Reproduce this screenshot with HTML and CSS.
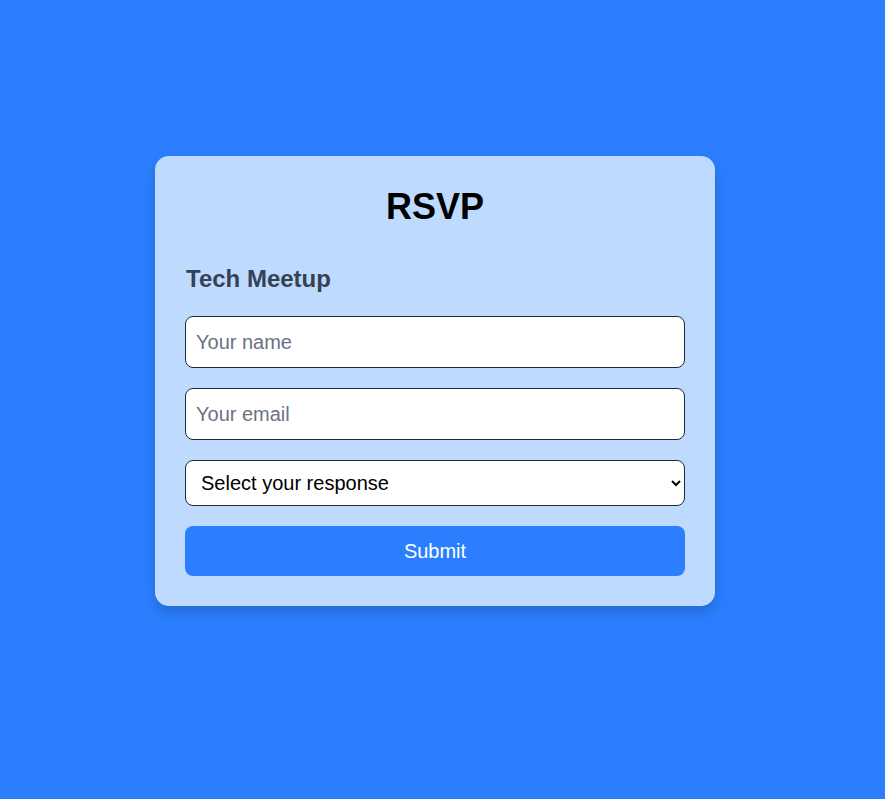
FILE: index.html
```html
<!DOCTYPE html>
<html lang="en">
<head>
<meta charset="utf-8">
<title>RSVP</title>
<link rel="stylesheet" href="styles.css">
</head>
<body>
<div class="card">
  <h1 class="title">RSVP</h1>
  <h2 class="event">Tech Meetup</h2>
  <form class="form">
    <input class="field" type="text" placeholder="Your name">
    <input class="field" type="email" placeholder="Your email">
    <select class="select">
      <option>Select your response</option>
      <option>Yes</option>
      <option>No</option>
      <option>Maybe</option>
    </select>
    <button class="submit" type="button">Submit</button>
  </form>
</div>
</body>
</html>
```

FILE: styles.css
```css
* { box-sizing: border-box; }
html, body { margin: 0; }
body {
  min-height: 100vh;
  background: #2b7fff;
  font-family: "Liberation Sans", Arial, sans-serif;
  display: flex;
  justify-content: center;
  align-items: center;
  padding: 0 15px 37px 0;
}
.card {
  width: 560px;
  background: #bedbff;
  border-radius: 14px;
  padding: 30px;
  box-shadow: 0 6px 14px rgba(0, 0, 0, 0.18);
}
.title {
  margin: 0;
  text-align: center;
  font-size: 36px;
  line-height: 42px;
  font-weight: 700;
  color: #000;
}
.event {
  margin: 37px 0 23px 1px;
  font-size: 24px;
  line-height: 28px;
  font-weight: 700;
  color: #364153;
}
.form {
  display: flex;
  flex-direction: column;
  gap: 20px;
}
.field {
  height: 52px;
  width: 100%;
  padding: 0 10px;
  border: 1px solid #1e2939;
  border-radius: 8px;
  background: #fff;
  font-family: inherit;
  font-size: 20px;
  color: #000;
  outline: none;
}
.field::placeholder { color: #6a7282; }
.select {
  height: 46px;
  width: 100%;
  padding: 0 10px 0 11px;
  border: 1px solid #1e2939;
  border-radius: 8px;
  background: #fff;
  font-family: inherit;
  font-size: 20px;
  color: #000;
}
.submit {
  height: 50px;
  width: 100%;
  border: 0;
  border-radius: 8px;
  background: #2b7fff;
  color: #fff;
  font-family: inherit;
  font-size: 20px;
  cursor: pointer;
}
```
